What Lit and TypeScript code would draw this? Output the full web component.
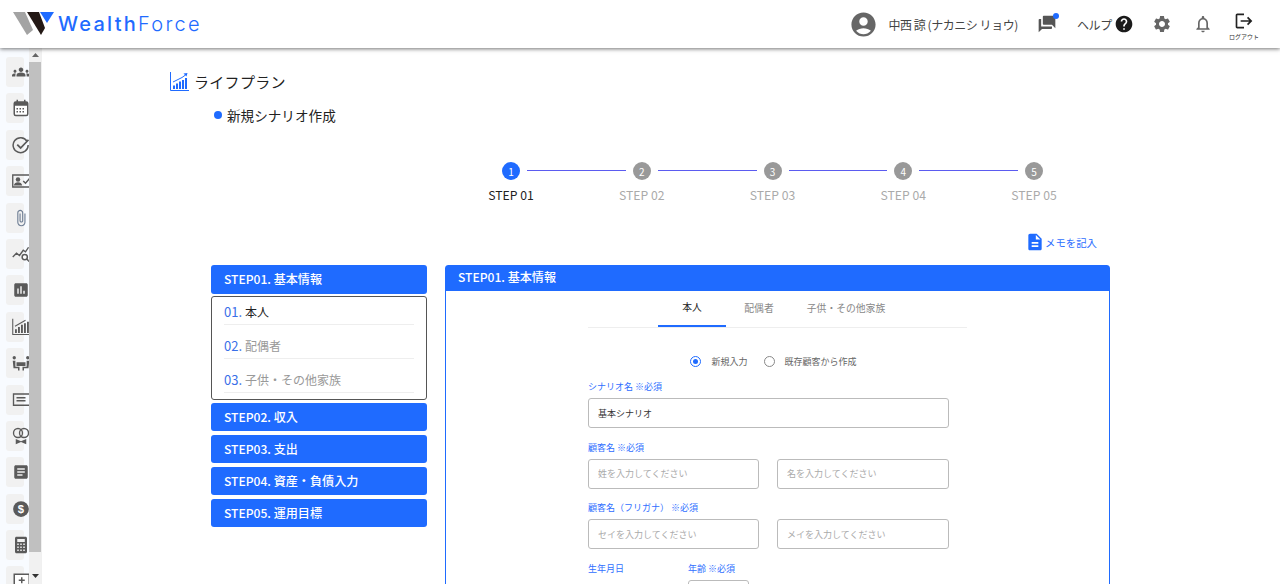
import { LitElement, css, html, svg } from 'lit'
import { customElement } from 'lit/decorators.js'

const ink = '#5a5a5a'

const railIcons = [
  svg`<path fill="${ink}" d="M12 12.75c1.63 0 3.07.39 4.24.9 1.08.48 1.76 1.56 1.76 2.73V18H6v-1.61c0-1.18.68-2.26 1.76-2.73 1.17-.52 2.61-.91 4.24-.91zM4 13c1.1 0 2-.9 2-2s-.9-2-2-2-2 .9-2 2 .9 2 2 2zm1.13 1.1c-.37-.06-.74-.1-1.13-.1-.99 0-1.93.21-2.78.58C.48 14.9 0 15.62 0 16.43V18h4.5v-1.61c0-.83.23-1.61.63-2.29zM20 13c1.1 0 2-.9 2-2s-.9-2-2-2-2 .9-2 2 .9 2 2 2zm4 3.43c0-.81-.48-1.53-1.22-1.85-.85-.37-1.79-.58-2.78-.58-.39 0-.76.04-1.13.1.4.68.63 1.46.63 2.29V18H24v-1.57zM12 6c1.66 0 3 1.34 3 3s-1.34 3-3 3-3-1.34-3-3 1.34-3 3-3z"/>`,
  svg`<rect x="3" y="4" width="18" height="18" rx="2" fill="#fff" stroke="${ink}" stroke-width="2"/><rect x="3" y="4" width="18" height="5" fill="${ink}"/><path stroke="${ink}" stroke-width="2" d="M7 1v5M17 1v5"/><path stroke="${ink}" stroke-width="2" stroke-dasharray="2 2" d="M6 13h12M6 17h12"/>`,
  svg`<path fill="none" stroke="${ink}" stroke-width="2" d="M20 7a10 10 0 1 0 1.500 5"/><path fill="none" stroke="${ink}" stroke-width="2.400" d="M7 11.500l4.500 4.500L22 5"/>`,
  svg`<path fill="none" stroke="${ink}" stroke-width="1.800" d="M24 4H1v16h23"/><circle cx="8" cy="10" r="3" fill="${ink}"/><path fill="${ink}" d="M2.500 18c0-3 3-4.500 5.500-4.500s5.500 1.500 5.500 4.500z"/><path fill="none" stroke="${ink}" stroke-width="2" d="M15 12l3 3 6-7"/>`,
  svg`<path fill="#6f7f95" d="M16.500 6v11.500c0 2.210-1.790 4-4 4s-4-1.790-4-4V5c0-1.380 1.120-2.500 2.500-2.500s2.500 1.120 2.500 2.500v10.500c0 .55-.45 1-1 1s-1-.45-1-1V6H10v9.500c0 1.380 1.120 2.500 2.500 2.500s2.500-1.120 2.500-2.500V5c0-2.210-1.790-4-4-4S7 2.790 7 5v12.500c0 3.040 2.460 5.500 5.500 5.500s5.500-2.460 5.500-5.500V6h-1.500z"/>`,
  svg`<path fill="none" stroke="${ink}" stroke-width="1.800" d="M1 16l5-5 4 3 5-7 3 2 4-6"/><circle cx="17" cy="16" r="3.500" fill="#fff" stroke="${ink}" stroke-width="2"/><path stroke="${ink}" stroke-width="2" d="M19.500 18.500l3.500 3.500"/>`,
  svg`<path fill="${ink}" d="M19 3H5c-1.100 0-2 .9-2 2v14c0 1.100.9 2 2 2h14c1.100 0 2-.9 2-2V5c0-1.100-.9-2-2-2zM9 17H7v-7h2v7zm4 0h-2V7h2v10zm4 0h-2v-4h2v4z"/>`,
  svg`<path fill="none" stroke="${ink}" stroke-width="1.400" d="M1 1v21h23"/><path fill="${ink}" d="M4 15h2.500v5H4zM8 12h2.500v8H8zM12 9h2.500v11H12zM16 7h2.500v13H16zM20 5h2.500v15H20z"/><path stroke="${ink}" stroke-width="1.400" d="M4 11l7-4 7-4"/>`,
  svg`<circle cx="3" cy="5" r="2.200" fill="${ink}"/><circle cx="21" cy="5" r="2.200" fill="${ink}"/><path fill="${ink}" d="M1 9h3.500v8H10v5H8v-3H2zM23 9h-3.500v8H14v5h2v-3h6zM6 11h12v5H6z"/>`,
  svg`<path fill="none" stroke="${ink}" stroke-width="1.800" d="M25 4H2v15h23"/><path stroke="${ink}" stroke-width="1.800" d="M6 9h12M6 13h12"/>`,
  svg`<circle cx="8" cy="8" r="6" fill="none" stroke="${ink}" stroke-width="1.800"/><circle cx="16" cy="8" r="6" fill="none" stroke="${ink}" stroke-width="1.800"/><path fill="${ink}" d="M5 16l7 3 7-3v7l-7-3-7 3z"/>`,
  svg`<path fill="${ink}" d="M19 3H5c-1.100 0-2 .9-2 2v14c0 1.100.9 2 2 2h14c1.100 0 2-.9 2-2V5c0-1.100-.9-2-2-2zm-5 14H7v-2h7v2zm3-4H7v-2h10v2zm0-4H7V7h10v2z"/>`,
  svg`<circle cx="12" cy="12" r="10.500" fill="${ink}"/><text x="12" y="17.500" text-anchor="middle" fill="#fff" font-size="15" font-weight="700" font-family="Liberation Sans, sans-serif">$</text>`,
  svg`<path fill="${ink}" d="M18 1H6C4.900 1 4 1.900 4 3v18c0 1.100.9 2 2 2h12c1.100 0 2-.9 2-2V3c0-1.100-.9-2-2-2zM7 4h10v4H7zm2 16H7v-2h2zm0-4H7v-2h2zm0-4H7v-2h2zm4 8h-2v-2h2zm0-4h-2v-2h2zm0-4h-2v-2h2zm4 8h-2v-2h2zm0-4h-2v-2h2zm0-4h-2v-2h2z"/>`,
  svg`<rect x="3" y="3" width="20" height="18" fill="#fff" stroke="${ink}" stroke-width="2"/><path stroke="${ink}" stroke-width="2" d="M13 7v8M9 11h8"/>`,
]

const steps = ['STEP 01', 'STEP 02', 'STEP 03', 'STEP 04', 'STEP 05']
const subItems = ['本人', '配偶者', '子供・その他家族']

@customElement('app-root')
export class AppRoot extends LitElement {
  static styles = css`
    :host {
      display: flex;
      flex-direction: column;
      height: 584px;
      overflow: hidden;
      background: #fff;
      color: #222;
      font-family: "Noto Sans CJK JP", Roboto, sans-serif;
    }
    .header {
      flex: none;
      height: 48px;
      display: flex;
      align-items: center;
      justify-content: space-between;
      padding: 0 20px 0 13px;
      background: #fff;
      box-shadow: 0 1px 4px rgba(0,0,0,.55);
      position: relative;
      z-index: 2;
    }
    .logo {
      display: flex;
      align-items: center;
      gap: 4px;
    }
    .logo-text {
      font-family: Inter, sans-serif;
      font-size: 20px;
      letter-spacing: 2.250px;
      color: #1f6bff;
      line-height: 1;
    }
    .logo-text b { font-weight: 500; }
    .logo-text span { font-weight: 300; }
    .tools {
      display: flex;
      align-items: center;
      font-size: 12px;
      letter-spacing: -.3px;
      color: #444;
    }
    .tools svg { display: block; }
    .user { display: flex; align-items: center; gap: 10px; margin-right: 19px; letter-spacing: -.45px; }
    .chat { position: relative; margin-right: 20px; }
    .chat i {
      position: absolute;
      top: -1px;
      right: -2px;
      width: 6px;
      height: 6px;
      border-radius: 50%;
      background: #1f6bff;
    }
    .help { display: flex; align-items: center; gap: 2px; margin-right: 18px; }
    .gear { margin-right: 21px; }
    .bell { margin-right: 15px; }
    .logout { display: flex; flex-direction: column; align-items: center; font-size: 6px; letter-spacing: 0; white-space: nowrap; color: #333; width: 32px; line-height: 1; gap: 3px; margin-top: 3px; }

    .body { flex: 1; display: flex; min-height: 0; }
    .rail {
      flex: none;
      width: 42px;
      display: flex;
      background: #f8fbff;
      border-right: 1px solid #f0f0f0;
      box-sizing: border-box;
    }
    .tiles {
      width: 29px;
      overflow: hidden;
      padding: 9px 0 0 6px;
      box-sizing: border-box;
      display: flex;
      flex-direction: column;
      gap: 6.400px;
    }
    .tile {
      flex: none;
      width: 18px;
      height: 30px;
      background: #f1f1f1;
      border-radius: 3px;
      display: flex;
      align-items: center;
    }
    .tile svg { flex: none; margin-left: 6px; display: block; }
    .scroll {
      width: 12px;
      display: flex;
      flex-direction: column;
      align-items: center;
      background: #f1f1f1;
    }
    .arrow { flex: none; height: 14px; width: 12px; display: flex; align-items: center; justify-content: center; }
    .thumb { flex: none; width: 100%; height: 490px; background: #c0c0c0; }
    .scroll .down { margin-top: 17px; }

    .main { flex: 1; min-width: 0; padding-top: 21px; }
    .page-title {
      display: flex;
      align-items: center;
      gap: 5px;
      margin-left: 128px;
      height: 24px;
      font-size: 15px;
      letter-spacing: .3px;
    }
    .sub-title {
      display: flex;
      align-items: center;
      gap: 5px;
      margin: 10px 0 0 172px;
      height: 24px;
      font-size: 13.600px;
    }
    .sub-title i { width: 8px; height: 8px; border-radius: 50%; background: #1f6bff; }

    .stepper {
      display: grid;
      grid-template-columns: repeat(4, 18px 112.750px) 18px;
      margin: 35px 0 0 460px;
      width: max-content;
      row-gap: 6px;
    }
    .dot {
      width: 18px;
      height: 18px;
      border-radius: 50%;
      background: #999;
      color: #fff;
      font-size: 10px;
      display: flex;
      align-items: center;
      justify-content: center;
    }
    .dot.on { background: #1f6bff; }
    .line { height: 1px; background: #5b5bf0; margin: 8px 7px 0; }
    .step-label {
      grid-row: 2;
      justify-self: center;
      white-space: nowrap;
      font-size: 12.200px;
      line-height: 18px;
      color: #aaa;
    }
    .step-label.on { color: #222; }

    .memo {
      display: flex;
      align-items: center;
      justify-content: flex-end;
      margin: 29px 183px 0 0;
      height: 18px;
      font-size: 10.400px;
      color: #2f6fff;
    }

    .columns { display: flex; align-items: flex-start; gap: 18px; margin: 14px 0 0 169px; }
    .nav { flex: none; width: 216px; display: flex; flex-direction: column; gap: 3.500px; }
    .nav-btn {
      height: 28.500px;
      box-sizing: border-box;
      padding: 0 0 1px 13px;
      display: flex;
      align-items: center;
      background: #1f6bff;
      color: #fff;
      border-radius: 3px;
      font-size: 12.100px;
      font-weight: 500;
    }
    .nav-box {
      height: 104px;
      box-sizing: border-box;
      margin: -1px 0;
      border: 1px solid #555;
      border-radius: 3px;
      padding: 0 12px;
    }
    .nav-item {
      height: 34px;
      box-sizing: border-box;
      border-bottom: 1px solid #eee;
      display: flex;
      align-items: flex-end;
      padding-bottom: 3px;
      gap: 3px;
      font-size: 12px;
      line-height: 18px;
      color: #999;
    }
    .nav-item:first-child { color: #222; height: 28px; }
    .nav-item b { font-weight: 400; font-size: 13px; color: #3a6fe8; }

    .panel {
      flex: none;
      width: 665px;
      height: 400px;
      box-sizing: border-box;
      border: 1px solid #1f6bff;
      border-radius: 3px 3px 0 0;
    }
    .panel-head {
      height: 25px;
      box-sizing: border-box;
      background: #1f6bff;
      color: #fff;
      font-size: 12.100px;
      font-weight: 500;
      padding: 0 0 5px 12px;
      display: flex;
      align-items: center;
    }
    .panel-body { margin-left: 142px; width: 379px; }
    .tabs {
      display: grid;
      grid-template-columns: 68px 66px 108px;
      padding-left: 70px;
      border-bottom: 1px solid #eee;
      height: 36px;
      font-size: 9.800px;
      color: #888;
    }
    .tab { display: flex; align-items: center; justify-content: center; height: 36px; box-sizing: border-box; padding-bottom: 2px; }
    .tab.on { color: #222; border-bottom: 2px solid #1f6bff; }
    .form { width: 361px; }
    .radios {
      display: flex;
      align-items: center;
      justify-content: center;
      margin: 25px 0 0 10px;
      height: 16px;
      font-size: 9px;
      color: #666;
    }
    .radio {
      width: 11px;
      height: 11px;
      box-sizing: border-box;
      border: 1px solid #888;
      border-radius: 50%;
      margin-right: 10px;
      display: flex;
      align-items: center;
      justify-content: center;
    }
    .radio.on { border-color: #1f6bff; }
    .radio.on::after { content: ''; width: 5px; height: 5px; border-radius: 50%; background: #1f6bff; }
    .radios span + .radio { margin-left: 16px; }
    .label { font-size: 9px; line-height: 14px; color: #2f6fff; }
    .group { margin-top: 12.500px; }
    .group.first { margin-top: 11px; }
    .group .label { margin-bottom: 4px; }
    .pair { display: flex; gap: 18px; }
    input {
      display: block;
      box-sizing: border-box;
      height: 30px;
      width: 171px;
      padding: 0 9px;
      border: 1px solid #bbb;
      border-radius: 3px;
      font: 9px "Noto Sans CJK JP", sans-serif;
      color: #333;
      outline: none;
    }
    .pair input:last-child { width: 172px; }
    input.wide { width: 100%; }
    input.age { width: 61px; }
    input::placeholder { color: #aaa; }
    .birth { display: flex; }
    .birth > div:first-child { width: 100px; }
  `

  render() {
    return html`
      <header class="header">
        <div class="logo">
          <svg width="41" height="24" viewBox="0 0 41 24">
            <path fill="#a3a3a3" d="M0 0h12l8 18-6 5z"/>
            <path fill="#231815" d="M14 0h12l6 16-4 7z"/>
            <path fill="#1f6bff" d="M27 0h14l-7 11z"/>
          </svg>
          <div class="logo-text"><b>Wealth</b><span>Force</span></div>
        </div>
        <div class="tools">
          <div class="user">
            <svg width="29" height="29" viewBox="0 0 24 24"><path fill="#666" d="M12 2C6.480 2 2 6.480 2 12s4.480 10 10 10 10-4.480 10-10S17.520 2 12 2zm0 4c1.930 0 3.500 1.570 3.500 3.500S13.930 13 12 13s-3.500-1.570-3.500-3.500S10.070 6 12 6zm0 14c-2.030 0-4.430-.82-6.140-2.880C7.550 15.800 9.680 15 12 15s4.450.8 6.140 2.120C16.430 19.180 14.030 20 12 20z"/></svg>
            <span>中西 諒 (ナカニシ リョウ)</span>
          </div>
          <div class="chat">
            <svg width="20" height="20" viewBox="0 0 24 24"><path fill="#555" d="M3 6h2v9h13v2c0 .55-.45 1-1 1H6l-4 4V7c0-.55.45-1 1-1zm4 6V3c0-.55.45-1 1-1h13c.55 0 1 .45 1 1v14l-4-4H8c-.55 0-1-.45-1-1z"/></svg>
            <i></i>
          </div>
          <div class="help">
            <span>ヘルプ</span>
            <svg width="20" height="20" viewBox="0 0 24 24"><path fill="#1a1a1a" d="M12 2C6.480 2 2 6.480 2 12s4.480 10 10 10 10-4.480 10-10S17.520 2 12 2zm1 17h-2v-2h2v2zm2.070-7.750l-.9.92C13.450 12.900 13 13.500 13 15h-2v-.5c0-1.100.45-2.100 1.170-2.830l1.240-1.260c.37-.36.59-.86.59-1.410 0-1.100-.9-2-2-2s-2 .9-2 2H8c0-2.210 1.790-4 4-4s4 1.790 4 4c0 .88-.36 1.680-.93 2.250z"/></svg>
          </div>
          <svg class="gear" width="20" height="20" viewBox="0 0 24 24"><path fill="#666" d="M19.140 12.940c.04-.3.06-.61.06-.94 0-.32-.02-.64-.07-.94l2.030-1.580c.18-.14.23-.41.12-.61l-1.920-3.320c-.12-.22-.37-.29-.59-.22l-2.390.96c-.5-.38-1.030-.7-1.620-.94l-.36-2.540c-.04-.24-.24-.41-.48-.41h-3.840c-.24 0-.43.17-.47.41l-.36 2.540c-.59.24-1.130.57-1.620.94l-2.390-.96c-.22-.08-.47 0-.59.22L2.740 8.870c-.12.21-.08.47.12.61l2.030 1.580c-.05.3-.09.63-.09.94s.02.64.07.94l-2.030 1.580c-.18.14-.23.41-.12.61l1.920 3.320c.12.22.37.29.59.22l2.390-.96c.5.38 1.030.7 1.620.94l.36 2.540c.05.24.24.41.48.41h3.840c.24 0 .44-.17.47-.41l.36-2.540c.59-.24 1.130-.56 1.620-.94l2.390.96c.22.08.47 0 .59-.22l1.920-3.320c.12-.22.07-.47-.12-.61l-2.010-1.580zM12 15.600c-1.980 0-3.600-1.620-3.600-3.600s1.620-3.600 3.600-3.600 3.600 1.620 3.600 3.600-1.620 3.600-3.600 3.600z"/></svg>
          <svg class="bell" width="20" height="20" viewBox="0 0 24 24"><path fill="#666" d="M12 22c1.100 0 2-.9 2-2h-4c0 1.100.9 2 2 2zm6-6v-5c0-3.070-1.630-5.640-4.500-6.320V4c0-.83-.67-1.500-1.500-1.500s-1.500.67-1.500 1.500v.68C7.640 5.360 6 7.920 6 11v5l-2 2v1h16v-1l-2-2zm-2 1H8v-6c0-2.480 1.510-4.500 4-4.500s4 2.020 4 4.500v6z"/></svg>
          <div class="logout">
            <svg width="20" height="20" viewBox="0 0 24 24"><path fill="#222" d="M17 7l-1.410 1.410L18.170 11H8v2h10.170l-2.580 2.580L17 17l5-5zM4 5h8V3H4c-1.100 0-2 .9-2 2v14c0 1.100.9 2 2 2h8v-2H4V5z"/></svg>
            <span>ログアウト</span>
          </div>
        </div>
      </header>
      <div class="body">
        <aside class="rail">
          <div class="tiles">
            ${railIcons.map(i => html`<div class="tile"><svg width="18" height="18" viewBox="0 0 24 24">${i}</svg></div>`)}
          </div>
          <div class="scroll">
            <div class="arrow"><svg width="7" height="4" viewBox="0 0 7 4"><path fill="#666" d="M3.500 0L7 4H0z"/></svg></div>
            <div class="thumb"></div>
            <div class="arrow down"><svg width="7" height="4" viewBox="0 0 7 4"><path fill="#333" d="M3.500 4L7 0H0z"/></svg></div>
          </div>
        </aside>
        <main class="main">
          <div class="page-title">
            <svg width="19" height="19" viewBox="0 0 19 19"><path fill="none" stroke="#1f6bff" d="M.5 0v18.500H19"/><path fill="#1f6bff" d="M3 13.500h2V17H3zM6 11.500h2V17H6zM9 9.500h2V17H9zM12 8h2v9h-2zM15 6h2v11h-2z"/><path fill="none" stroke="#1f6bff" d="M3 10l5-2.500 4-2 3.500-2.500"/><path fill="#1f6bff" d="M13.500 1.500L17.500 1l-1 3.500z"/></svg>
            <span>ライフプラン</span>
          </div>
          <div class="sub-title"><i></i><span>新規シナリオ作成</span></div>
          <div class="stepper">
            ${steps.map((_, i) => html`
              <div class="dot ${i === 0 ? 'on' : ''}">${i + 1}</div>
              ${i < 4 ? html`<div class="line"></div>` : ''}
            `)}
            ${steps.map((s, i) => html`<div class="step-label ${i === 0 ? 'on' : ''}" style="grid-column:${i * 2 + 1}">${s}</div>`)}
          </div>
          <div class="memo">
            <svg width="20" height="20" viewBox="0 0 24 24"><path fill="#1f6bff" d="M14 2H6c-1.100 0-1.990.9-1.990 2L4 20c0 1.100.89 2 1.990 2H18c1.100 0 2-.9 2-2V8l-6-6zm2 16H8v-2h8v2zm0-4H8v-2h8v2zm-3-5V3.500L18.500 9H13z"/></svg>
            <span>メモを記入</span>
          </div>
          <div class="columns">
            <nav class="nav">
              <div class="nav-btn">STEP01. 基本情報</div>
              <div class="nav-box">
                ${subItems.map((s, i) => html`<div class="nav-item"><b>0${i + 1}.</b>${s}</div>`)}
              </div>
              <div class="nav-btn">STEP02. 収入</div>
              <div class="nav-btn">STEP03. 支出</div>
              <div class="nav-btn">STEP04. 資産・負債入力</div>
              <div class="nav-btn">STEP05. 運用目標</div>
            </nav>
            <section class="panel">
              <div class="panel-head">STEP01. 基本情報</div>
              <div class="panel-body">
                <div class="tabs">
                  ${subItems.map((s, i) => html`<div class="tab ${i === 0 ? 'on' : ''}">${s}</div>`)}
                </div>
                <div class="form">
                  <div class="radios">
                    <div class="radio on"></div><span>新規入力</span>
                    <div class="radio"></div><span>既存顧客から作成</span>
                  </div>
                  <div class="group first">
                    <div class="label">シナリオ名 ※必須</div>
                    <input class="wide" value="基本シナリオ" />
                  </div>
                  <div class="group">
                    <div class="label">顧客名 ※必須</div>
                    <div class="pair">
                      <input placeholder="姓を入力してください" />
                      <input placeholder="名を入力してください" />
                    </div>
                  </div>
                  <div class="group">
                    <div class="label">顧客名（フリガナ） ※必須</div>
                    <div class="pair">
                      <input placeholder="セイを入力してください" />
                      <input placeholder="メイを入力してください" />
                    </div>
                  </div>
                  <div class="group birth">
                    <div><div class="label">生年月日</div></div>
                    <div>
                      <div class="label">年齢 ※必須</div>
                      <input class="age" />
                    </div>
                  </div>
                </div>
              </div>
            </section>
          </div>
        </main>
      </div>
    `
  }
}
